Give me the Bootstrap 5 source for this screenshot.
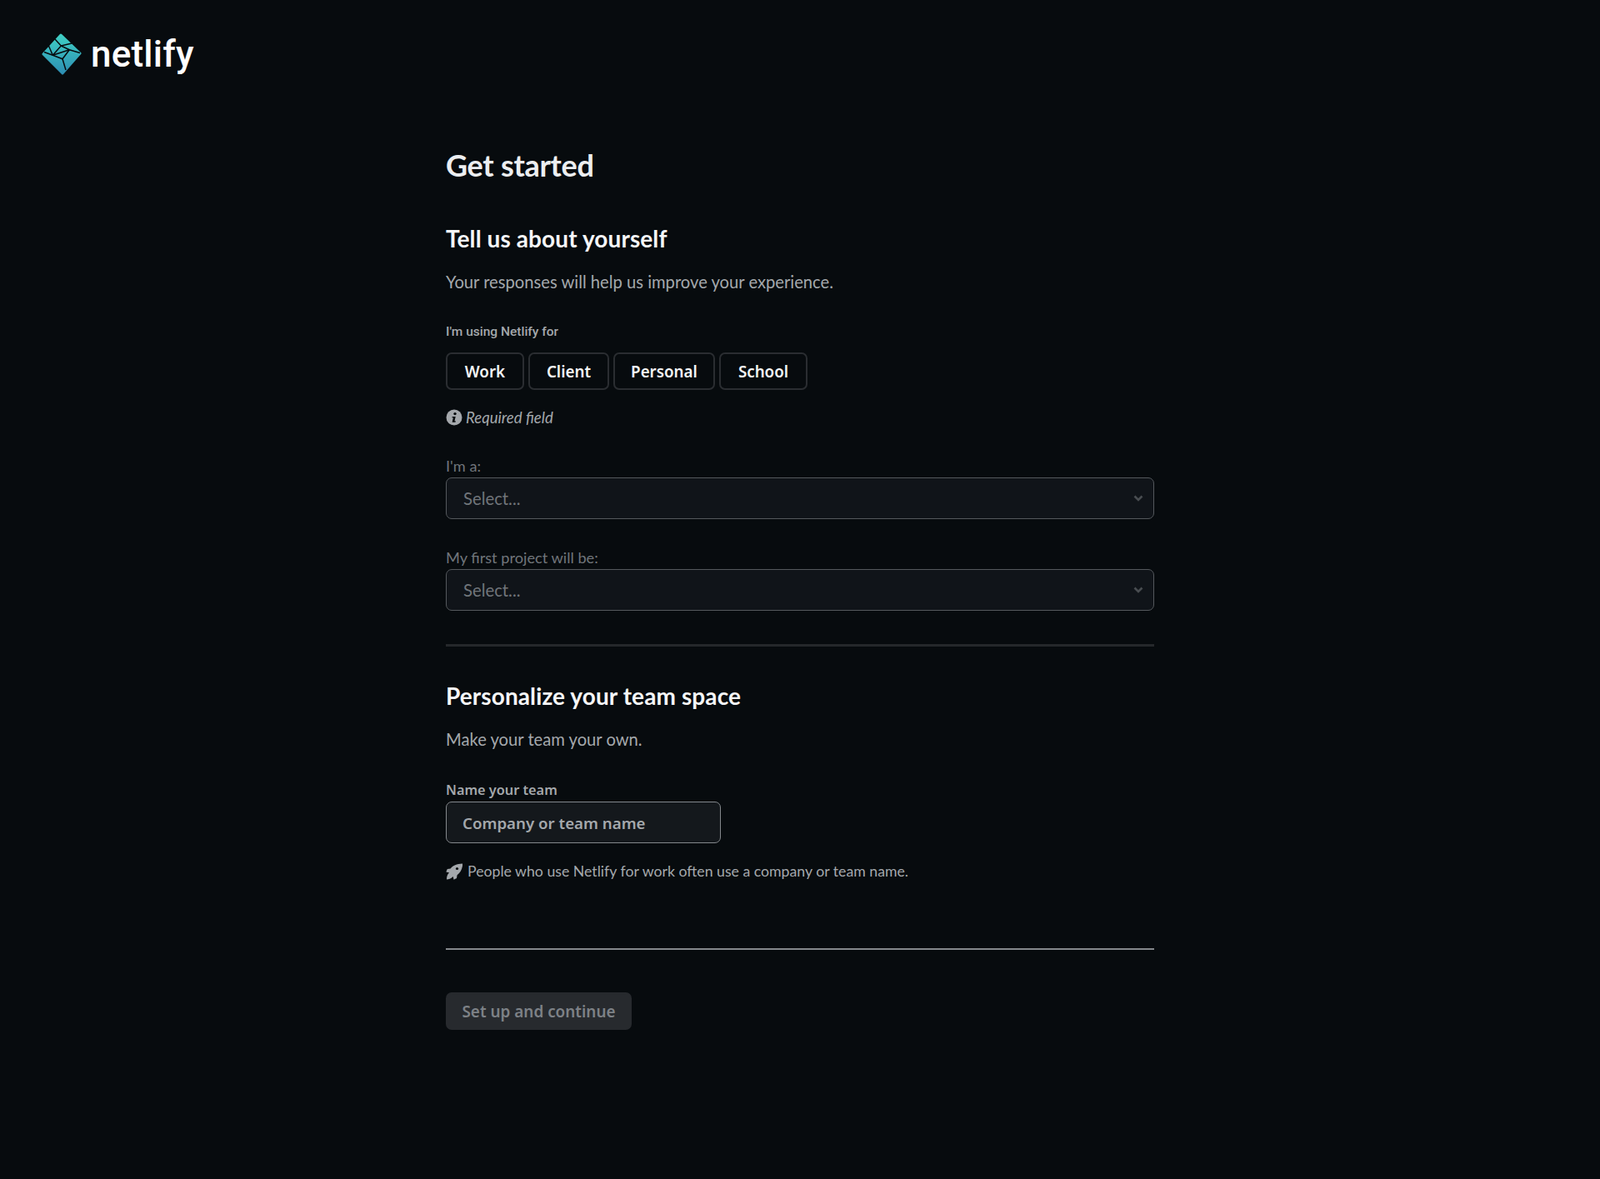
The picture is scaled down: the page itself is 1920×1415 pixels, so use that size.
<!DOCTYPE html>
<html lang="en">
<head>
<meta charset="utf-8">
<title>Get started</title>
<link href="https://cdn.jsdelivr.net/npm/bootstrap@5.3.0/dist/css/bootstrap.min.css" rel="stylesheet">
<style>
html,body{background:#070b0e;min-height:100%}
body{font-family:"Lato","Noto Sans",sans-serif;color:#fff;min-height:1415px}
.site-head{padding:40px 50px 0;height:160px}
.brand-name{font-family:"Roboto",sans-serif;font-weight:500;font-size:44px;line-height:50px;color:#fff;letter-spacing:.2px;margin-left:3px}
.onboard{width:850px;margin-left:535px}
.ttl-main{font-size:36px;font-weight:700;line-height:44px;color:#eceef0;margin:16px 0 0;letter-spacing:-.3px}
.ttl-sub{font-size:28px;font-weight:700;line-height:36px;color:#f5f6f7;margin:0;letter-spacing:.1px}
.ttl-first{margin-top:48px}
.lede{font-size:20.2px;line-height:28px;color:#a4a8ac;margin:20px 0 0}
.fld-small{font-family:"Roboto",sans-serif;font-size:15.5px;font-weight:500;line-height:20px;color:#a4a8ac;margin:36px 0 0}
.use-row{margin-top:15px;gap:5px}
.use-btn{height:45px;border:2px solid #2a2d31;border-radius:7px;background:transparent;color:#f5f6f7;font-family:"Noto Sans",sans-serif;font-weight:600;font-size:18.8px;padding:2px 0 0;line-height:39px;flex:none}
.use-btn:hover{background:transparent;color:#f5f6f7;border-color:#2a2d31}
.w-work{width:94px}.w-client{width:97px}.w-personal{width:122px}.w-school{width:106px}
.req{font-size:18.6px;font-style:italic;color:#a4a8ac;line-height:24px;margin-top:21px}
.ico-s{width:20px;height:20px;flex:none}
.fld-label{display:block;font-size:18.2px;line-height:22px;color:#70757a;margin:0 0 3px}
.sel-box{height:50px;background-color:#101419;border:1px solid #54585c;border-radius:7px;color:#70757a;font-size:20.3px;padding:0 20px;box-shadow:none;--bs-form-select-bg-img:none;background-image:url("data:image/svg+xml,%3Csvg xmlns='http://www.w3.org/2000/svg' viewBox='0 0 12 10'%3E%3Cpath d='M1.5 2.5 6 7l4.5-4.5' fill='none' stroke='%23484c50' stroke-width='2.6'/%3E%3C/svg%3E");background-repeat:no-repeat;background-position:right 12px center;background-size:12px 10px}
.sel-box:focus{background-color:#101419;color:#70757a;border-color:#54585c;box-shadow:none}
.sel-gap{margin-top:35px}
.sel-gap2{margin-top:35px}
.soft-rule{height:3px;margin:40px 0 0;background:#25282b;border:0;opacity:1}
.ttl-second{margin-top:41px}
.name-label{display:block;font-family:"Noto Sans",sans-serif;font-size:16.3px;font-weight:600;line-height:22px;color:#a4a8ac;margin:36px 0 3px}
.name-field{width:330px;height:50px;background:#14181c;border:1px solid #84888c;border-radius:7px;color:#a4a8ac;font-family:"Noto Sans",sans-serif;font-weight:600;font-size:18.7px;padding:0 19px}
.name-field::placeholder{color:#a4a8ac;opacity:1}
.name-field:focus{background:#14181c;color:#a4a8ac;border-color:#84888c;box-shadow:none}
.hint{font-size:17.7px;line-height:24px;color:#a4a8ac;margin-top:22px;gap:6px}
.hard-rule{height:2px;margin:80px 0 0;background:#84888c;border:0;opacity:1}
.go-btn{display:block;width:223px;height:45px;margin-top:51px;padding:2px 0 0;border:0;border-radius:7px;background:#272a2e;color:#7d8186;font-family:"Noto Sans",sans-serif;font-weight:600;font-size:18.9px;line-height:43px}
.go-btn:disabled{background:#272a2e;color:#7d8186;opacity:1}
</style>
</head>
<body>
<header class="site-head d-flex align-items-start">
  <div class="d-flex align-items-center gap-2">
    <svg width="48" height="50" viewBox="0 0 48 50" aria-hidden="true">
      <defs><linearGradient id="nfy" x1="0" y1="0" x2="0" y2="1"><stop offset="0" stop-color="#3fcfc4"/><stop offset="1" stop-color="#2d8fb3"/></linearGradient></defs>
      <path d="M23 2 46 24 25 48 2 25Z" fill="url(#nfy)" stroke="url(#nfy)" stroke-width="3" stroke-linejoin="round"/>
      <g stroke="#070b0e" stroke-width="1.500" fill="none" stroke-linejoin="round">
        <path d="M16 7 23.300 15 13.300 26.300 3 22.500"/><path d="M23.300 15 36 12"/><path d="M23.300 15 33.300 19.700 13.300 26.300"/><path d="M33.300 19.700 46 23.500"/><path d="M33.300 19.700 25 30.700 13.300 26.300"/><path d="M25 30.700 29 44"/><path d="M8 14 13.300 26.300"/>
      </g>
    </svg>
    <span class="brand-name">netlify</span>
  </div>
</header>
<main class="onboard">
  <h1 class="ttl-main">Get started</h1>
  <h2 class="ttl-sub ttl-first">Tell us about yourself</h2>
  <p class="lede">Your responses will help us improve your experience.</p>
  <div class="fld-small">I'm using Netlify for</div>
  <div class="d-flex use-row">
    <button type="button" class="btn use-btn w-work">Work</button>
    <button type="button" class="btn use-btn w-client">Client</button>
    <button type="button" class="btn use-btn w-personal">Personal</button>
    <button type="button" class="btn use-btn w-school">School</button>
  </div>
  <div class="req d-flex align-items-center gap-1">
    <svg class="ico-s" viewBox="0 0 20 20" aria-hidden="true"><circle cx="10" cy="10" r="9.500" fill="#a4a8ac"/><circle cx="11" cy="5.600" r="1.700" fill="#070b0e"/><path d="M7.700 9h4l-1.200 5.300h1.300l-.3 1.400H7.600l1.200-5.400H7.400Z" fill="#070b0e"/></svg>
    <span>Required field</span>
  </div>
  <div class="sel-gap">
    <label class="fld-label">I'm a:</label>
    <select class="form-select sel-box"><option>Select...</option></select>
  </div>
  <div class="sel-gap2">
    <label class="fld-label">My first project will be:</label>
    <select class="form-select sel-box"><option>Select...</option></select>
  </div>
  <hr class="soft-rule">
  <h2 class="ttl-sub ttl-second">Personalize your team space</h2>
  <p class="lede">Make your team your own.</p>
  <label class="name-label" for="team">Name your team</label>
  <input id="team" class="form-control name-field" type="text" placeholder="Company or team name">
  <div class="hint d-flex align-items-center">
    <svg class="ico-s" viewBox="0 0 20 20" aria-hidden="true"><path d="M19.800.5C13 .8 8.500 2.800 5.500 6.500L1.800 7 .3 10.500l3.700.8-1 1.200C1.500 14.500 1 16.800 1 19.500c2.800-.2 5-1 6.500-2.500l1.200-1 .8 3.800 3.500-1.800.6-3.800c4.200-3 6.400-7.700 6.700-13.700Z" fill="#a4a8ac"/><circle cx="13.500" cy="6.500" r="1.600" fill="#070b0e"/></svg>
    <span>People who use Netlify for work often use a company or team name.</span>
  </div>
  <hr class="hard-rule">
  <button type="button" class="btn go-btn" disabled>Set up and continue</button>
</main>
</body>
</html>
